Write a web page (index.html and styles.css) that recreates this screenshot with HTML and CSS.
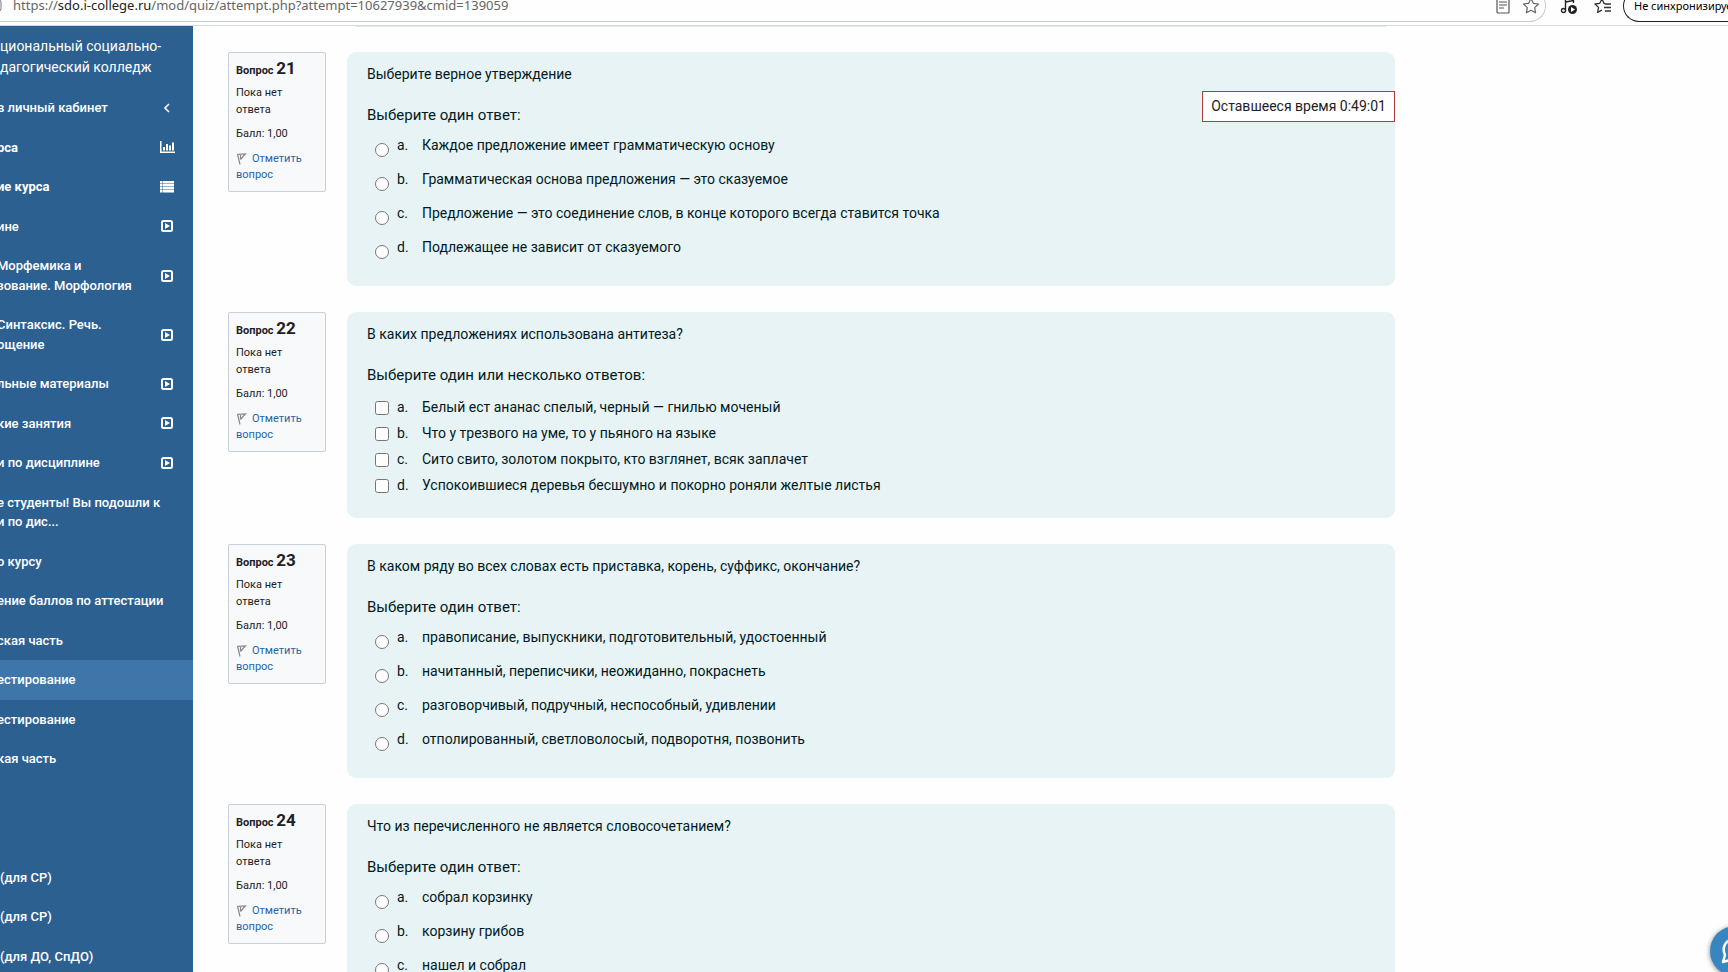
FILE: index.html
```html
<!DOCTYPE html>
<html lang="ru">
<head>
    <meta charset="UTF-8">
    <meta name="viewport" content="width=device-width, initial-scale=1.0">
    <title>Итоговое тестирование</title>
    <link rel="stylesheet" href="styles.css">
</head>
<body>
    <!-- Shared icons -->
    <svg class="sprite" aria-hidden="true">
        <symbol id="icon-play" viewBox="0 0 12 12">
            <rect x="1" y="1" width="10" height="10" rx="1.5" fill="none" stroke="currentColor" stroke-width="2"/>
            <path d="M4 3v6l5-3z" fill="currentColor"/>
        </symbol>
        <symbol id="icon-flag" viewBox="0 0 12 14">
            <path d="M1.5 2 4 12.500M1.500 2.300 9.500 2 7 4.500 4.500 7.500M4.500 3v4.500" fill="none" stroke="#8a8a8a" stroke-width="1.2"/>
        </symbol>
    </svg>

    <!-- Browser bar -->
    <header class="toolbar">
        <div class="address">
            <svg class="lock" viewBox="0 0 10 14"><rect x="1" y="1" width="8" height="11" rx="2" fill="none" stroke="#777"/></svg>
            <div class="url">https://<b>sdo.i-college.ru</b>/mod/quiz/attempt.php?attempt=10627939&amp;cmid=139059</div>
            <button class="icon-btn" aria-label="Режим чтения">
                <svg width="16" height="18" viewBox="0 0 16 18" fill="none" stroke="#555" stroke-width="1.2"><rect x="2" y="1" width="12" height="15" rx="1"/><path d="M4 5h8M4 8h8M4 11h5"/></svg>
            </button>
            <button class="icon-btn" aria-label="В избранное">
                <svg width="18" height="18" viewBox="0 0 18 18" fill="none" stroke="#666" stroke-width="1.2" stroke-linejoin="round"><path d="m9 1.5 2.3 4.8 5.2.7-3.8 3.6.9 5.2L9 13.3l-4.6 2.5.9-5.2L1.500 7l5.200-.7z"/></svg>
            </button>
        </div>
        <button class="icon-btn" aria-label="Медиа">
            <svg width="18" height="18" viewBox="0 0 18 18" fill="none" stroke="#222" stroke-width="1.4"><circle cx="3.500" cy="13.500" r="2"/><path d="M5.500 13.500V1.500l8-1.500v6M5.500 5l8-1.500"/><circle cx="12.500" cy="12.500" r="4.500" fill="#222" stroke="none"/><path d="M11 10v5l4-2.500z" fill="#fff" stroke="none"/></svg>
        </button>
        <button class="icon-btn" aria-label="Избранное">
            <svg width="18" height="18" viewBox="0 0 18 18" fill="none" stroke="#333" stroke-width="1.3" stroke-linejoin="round"><path d="M11 6.500h-1L8 1.800 5.800 6.300 1 7l3.500 3.400-.8 5 4.200-2.300M11 7h6M10 10.500h7M11 14h6"/></svg>
        </button>
        <button class="profile">Не синхронизируется</button>
    </header>

    <div class="page">
        <nav class="sidebar">
            <a class="brand" href="#">циональный социально-<br>дагогический колледж</a>
            <ul>
                <li><a href="#"><span>в личный кабинет</span>
                    <svg class="icon" viewBox="0 0 16 12"><path d="M10 2 6 6l4 4" fill="none" stroke="currentColor" stroke-width="1.6"/></svg></a></li>
                <li><a class="strong" href="#"><span>рса</span>
                    <svg class="icon" viewBox="0 0 16 12" fill="currentColor"><path d="M1 0h1.500v10.500H16V12H1zM4 6h2v3.500H4zM7 3h2v6.500H7zM10 4.500h2v5h-2zM13 1.500h2v8h-2z"/></svg></a></li>
                <li><a class="strong" href="#"><span>ие курса</span>
                    <svg class="icon" viewBox="0 0 16 12" fill="currentColor"><path d="M1 0h2v2.500H1zM3.500 0H15v2.500H3.500zM1 3h2v2.500H1zM3.500 3H15v2.500H3.500zM1 6h2v2.500H1zM3.500 6H15v2.500H3.500zM1 9h2v2.500H1zM3.500 9H15v2.500H3.500z"/></svg></a></li>
                <li><a href="#"><span>ине</span><svg class="icon"><use href="#icon-play"/></svg></a></li>
                <li><a href="#"><span>Морфемика и<br>зование. Морфология</span><svg class="icon"><use href="#icon-play"/></svg></a></li>
                <li><a href="#"><span>Синтаксис. Речь.<br>ощение</span><svg class="icon"><use href="#icon-play"/></svg></a></li>
                <li><a href="#"><span>льные материалы</span><svg class="icon"><use href="#icon-play"/></svg></a></li>
                <li><a href="#"><span>кие занятия</span><svg class="icon"><use href="#icon-play"/></svg></a></li>
                <li><a href="#"><span>и по дисциплине</span><svg class="icon"><use href="#icon-play"/></svg></a></li>
                <li><a href="#"><span>е студенты! Вы подошли к<br>и по дис...</span></a></li>
                <li><a href="#"><span>о курсу</span></a></li>
                <li><a href="#"><span>ение баллов по аттестации</span></a></li>
                <li><a href="#"><span>ская часть</span></a></li>
                <li><a class="active" href="#"><span>естирование</span></a></li>
                <li><a href="#"><span>естирование</span></a></li>
                <li><a href="#"><span>кая часть</span></a></li>
            </ul>
            <ul class="other">
                <li><a href="#"><span>(для СР)</span></a></li>
                <li><a href="#"><span>(для СР)</span></a></li>
                <li><a href="#"><span>(для ДО, СпДО)</span></a></li>
            </ul>
        </nav>

        <main class="quiz">
            <div class="timer">Оставшееся время 0:49:01</div>
            <div class="card-edge"></div>

            <section class="question">
                <div class="info">
                    <h3>Вопрос <span>21</span></h3>
                    <p>Пока нет ответа</p>
                    <p>Балл: 1,00</p>
                    <a href="#"><svg class="flag"><use href="#icon-flag"/></svg>Отметить вопрос</a>
                </div>
                <fieldset class="content">
                    <p class="text">Выберите верное утверждение</p>
                    <p class="prompt">Выберите один ответ:</p>
                    <div class="answers">
                        <label><input type="radio" name="q21"><span>a.</span>Каждое предложение имеет грамматическую основу</label>
                        <label><input type="radio" name="q21"><span>b.</span>Грамматическая основа предложения — это сказуемое</label>
                        <label><input type="radio" name="q21"><span>c.</span>Предложение — это соединение слов, в конце которого всегда ставится точка</label>
                        <label><input type="radio" name="q21"><span>d.</span>Подлежащее не зависит от сказуемого</label>
                    </div>
                </fieldset>
            </section>

            <section class="question">
                <div class="info">
                    <h3>Вопрос <span>22</span></h3>
                    <p>Пока нет ответа</p>
                    <p>Балл: 1,00</p>
                    <a href="#"><svg class="flag"><use href="#icon-flag"/></svg>Отметить вопрос</a>
                </div>
                <fieldset class="content">
                    <p class="text">В каких предложениях использована антитеза?</p>
                    <p class="prompt">Выберите один или несколько ответов:</p>
                    <div class="answers multiple">
                        <label><input type="checkbox"><span>a.</span>Белый ест ананас спелый, черный — гнилью моченый</label>
                        <label><input type="checkbox"><span>b.</span>Что у трезвого на уме, то у пьяного на языке</label>
                        <label><input type="checkbox"><span>c.</span>Сито свито, золотом покрыто, кто взглянет, всяк заплачет</label>
                        <label><input type="checkbox"><span>d.</span>Успокоившиеся деревья бесшумно и покорно роняли желтые листья</label>
                    </div>
                </fieldset>
            </section>

            <section class="question">
                <div class="info">
                    <h3>Вопрос <span>23</span></h3>
                    <p>Пока нет ответа</p>
                    <p>Балл: 1,00</p>
                    <a href="#"><svg class="flag"><use href="#icon-flag"/></svg>Отметить вопрос</a>
                </div>
                <fieldset class="content">
                    <p class="text">В каком ряду во всех словах есть приставка, корень, суффикс, окончание?</p>
                    <p class="prompt">Выберите один ответ:</p>
                    <div class="answers">
                        <label><input type="radio" name="q23"><span>a.</span>правописание, выпускники, подготовительный, удостоенный</label>
                        <label><input type="radio" name="q23"><span>b.</span>начитанный, переписчики, неожиданно, покраснеть</label>
                        <label><input type="radio" name="q23"><span>c.</span>разговорчивый, подручный, неспособный, удивлении</label>
                        <label><input type="radio" name="q23"><span>d.</span>отполированный, светловолосый, подворотня, позвонить</label>
                    </div>
                </fieldset>
            </section>

            <section class="question">
                <div class="info">
                    <h3>Вопрос <span>24</span></h3>
                    <p>Пока нет ответа</p>
                    <p>Балл: 1,00</p>
                    <a href="#"><svg class="flag"><use href="#icon-flag"/></svg>Отметить вопрос</a>
                </div>
                <fieldset class="content">
                    <p class="text">Что из перечисленного не является словосочетанием?</p>
                    <p class="prompt">Выберите один ответ:</p>
                    <div class="answers">
                        <label><input type="radio" name="q24"><span>a.</span>собрал корзинку</label>
                        <label><input type="radio" name="q24"><span>b.</span>корзину грибов</label>
                        <label><input type="radio" name="q24"><span>c.</span>нашел и собрал</label>
                    </div>
                </fieldset>
            </section>
        </main>
    </div>

    <button class="chat" aria-label="Чат">
        <svg width="30" height="30" viewBox="0 0 30 30" fill="none" stroke="#fff" stroke-width="2.500" stroke-linejoin="round"><path d="M5 19C1 10 7 3 15 3s13 5 13 11-6 11-13 11c-2 0-4-.5-5-1l-7 2z"/></svg>
    </button>
</body>
</html>
```
FILE: styles.css
```css
:root {
    --sidebar: #2c6090;
    --active: #3f76a9;
    --card: #e7f3f5;
    --link: #1f65a5;
}

* {
    box-sizing: border-box;
    margin: 0;
    padding: 0;
}

body {
    display: flex;
    flex-direction: column;
    height: 100vh;
    overflow: hidden;
    font-family: Roboto, sans-serif;
    font-size: 14px;
    line-height: 1.5;
    color: #1d2125;
    background: #fefefe;
}

a {
    color: inherit;
    text-decoration: none;
}

button {
    border: none;
    background: none;
    font: inherit;
    cursor: pointer;
}

.sprite {
    display: none;
}

/* Browser bar */
.toolbar {
    display: flex;
    align-items: flex-end;
    height: 26px;
    flex-shrink: 0;
    padding-bottom: 3px;
    border-bottom: 1px solid #d5dbdd;
    overflow: hidden;
    font-family: "Noto Sans", sans-serif;
}

.address {
    flex: 1;
    display: flex;
    align-items: center;
    height: 32px;
    border-bottom: 1px solid #c4cccf;
    border-right: 1px solid #c4cccf;
    border-radius: 0 16px 16px 0;
    padding-right: 5px;
    gap: 11px;
}

.lock {
    width: 10px;
    height: 14px;
    margin-left: -8px;
}

.url {
    flex: 1;
    font-size: 13px;
    color: #666;
    white-space: nowrap;
}

.url b {
    font-weight: 400;
    color: #222;
}

.icon-btn {
    display: flex;
    align-items: center;
    height: 32px;
}

.toolbar > .icon-btn {
    margin-left: 14px;
}

.toolbar > .icon-btn + .icon-btn {
    margin-left: 16px;
}

.profile {
    width: 105px;
    height: 32px;
    margin-left: 11px;
    padding-left: 10px;
    border: 1px solid #222;
    border-right: none;
    border-radius: 16px 0 0 16px;
    font-size: 11px;
    text-align: left;
    white-space: nowrap;
    overflow: hidden;
}

/* Layout */
.page {
    flex: 1;
    display: flex;
    min-height: 0;
}

/* Sidebar */
.sidebar {
    width: 193px;
    flex-shrink: 0;
    overflow: hidden;
    background: var(--sidebar);
    color: #fff;
    font-size: 13px;
    font-weight: 500;
    white-space: nowrap;
}

.sidebar ul {
    list-style: none;
}

.brand {
    display: block;
    padding: 10px 0;
    font-size: 14px;
    font-weight: 400;
}

.sidebar li a {
    display: flex;
    align-items: center;
    justify-content: space-between;
    padding: 10px 18px 10px 0;
}

.sidebar li span {
    margin-left: -3px;
}

.sidebar .other {
    margin-top: 79px;
}

.sidebar .other span {
    margin-left: 0;
}

.sidebar .strong {
    font-weight: 700;
}

.sidebar .active {
    background: var(--active);
}

.icon {
    width: 16px;
    height: 12px;
    flex-shrink: 0;
}

/* Quiz */
.quiz {
    position: relative;
    flex: 1;
    max-width: 1202px;
    padding-left: 35px;
    overflow: hidden;
}

/* bottom edge of the question scrolled out above */
.card-edge {
    height: 1px;
    margin: 0 9px 25px 128px;
    background: #dfe7e9;
}

.timer {
    position: absolute;
    top: 65px;
    right: 0;
    padding: 4px 8px;
    border: 1px solid #b03a3f;
    background: #fff;
}

.question {
    display: flex;
    align-items: flex-start;
    gap: 21px;
    margin-bottom: 26px;
}

.info {
    width: 98px;
    flex-shrink: 0;
    padding: 6px 7px 7px;
    border: 1px solid #cad0d7;
    border-radius: 2px;
    background: #f8f9fa;
    font-size: 11px;
}

.info h3 {
    font-size: 11px;
    line-height: 18px;
    margin-bottom: 5px;
}

.info h3 span {
    font-size: 17px;
}

.info p {
    margin-bottom: 8px;
}

.info a {
    color: var(--link);
}

.flag {
    width: 12px;
    height: 14px;
    margin-right: 4px;
    vertical-align: middle;
}

.content {
    flex: 1;
    min-width: 0;
    padding: 12px 20px;
    border: none;
    border-radius: 9px;
    background: var(--card);
    color: #001a1e;
}

.prompt {
    margin-top: 19px;
    font-size: 15px;
    line-height: 23px;
}

.answers {
    padding: 8px 0 3px 8px;
}

.answers label {
    display: flex;
    align-items: flex-start;
    height: 34px;
}

.answers label span {
    width: 25px;
}

.answers input {
    width: 14px;
    height: 14px;
    margin: 8px 8px 0 0;
}

.multiple {
    padding-top: 10px;
    padding-bottom: 5px;
}

.multiple label {
    height: 26px;
}

.multiple input {
    margin-top: 4px;
}

/* Chat button */
.chat {
    position: absolute;
    right: -32px;
    bottom: -4px;
    display: flex;
    align-items: center;
    justify-content: center;
    width: 50px;
    height: 50px;
    border-radius: 50%;
    background: #3886c0;
    box-shadow: 0 1px 5px rgba(0, 0, 0, 0.5);
}
```
